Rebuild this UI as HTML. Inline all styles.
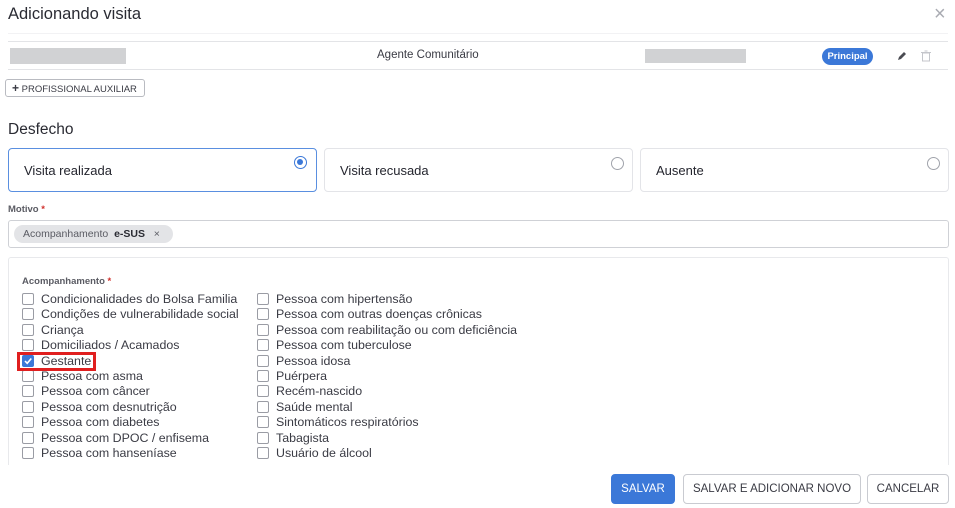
<!DOCTYPE html>
<html><head><meta charset="utf-8"><style>
*{box-sizing:border-box;margin:0;padding:0}
body{width:955px;height:508px;background:#fff;font-family:"Liberation Sans",sans-serif;color:#24252e;position:relative;overflow:hidden}
.a{position:absolute}
.gbar{background:#d1d2d4}
.card{position:absolute;top:148px;height:44px;border:1px solid #e3e4e8;border-radius:4px;font-size:13px;padding:14px 15px}
.radio{position:absolute;top:8px;right:8px;width:13px;height:13px;border:1px solid #a0a3ab;border-radius:50%}
.cb{position:absolute;width:12px;height:12px;border:1px solid #9a9ca4;border-radius:2px;background:#fff}
.lbl{position:absolute;font-size:12.4px;color:#3a3b44;white-space:nowrap;line-height:14px}
.btn{position:absolute;top:474px;height:30px;border:1px solid #c9cbd1;border-radius:4px;font-size:11.5px;text-align:center;line-height:28px;color:#3a3b44}
</style></head><body>
<div class="a" style="left:8px;top:5px;font-size:16.5px;color:#2a2b33">Adicionando visita</div>
<div class="a" style="left:934px;top:3px;font-size:20px;color:#a9abb2">×</div>
<div class="a" style="left:8px;top:33px;width:940px;height:1px;background:#f2f2f4"></div>
<div class="a" style="left:8px;top:41px;width:940px;height:1px;background:#e3e4e7"></div>
<div class="a" style="left:8px;top:69px;width:940px;height:1px;background:#e3e4e7"></div>
<div class="a gbar" style="left:10px;top:48px;width:116px;height:16px"></div>
<div class="a" style="left:377px;top:49px;font-size:11.5px;color:#3a3b44">Agente Comunitário</div>
<div class="a gbar" style="left:645px;top:49px;width:101px;height:14px"></div>
<div class="a" style="left:822px;top:48px;width:51px;height:17px;border-radius:9px;background:#3b78d8;color:#fff;font-size:9.5px;font-weight:bold;text-align:center;line-height:17px">Principal</div>
<svg class="a" style="left:896px;top:50px" width="12" height="12" viewBox="0 0 12 12"><path d="M2 10 L3 7 L8 2 L10 4 L5 9 Z" fill="#4a4b52"/></svg>
<svg class="a" style="left:921px;top:50px" width="10" height="12" viewBox="0 0 10 12"><rect x="1.5" y="3" width="7" height="8" fill="none" stroke="#c4c6cb"/><path d="M0 2.5h10M3.5 1h3" stroke="#c4c6cb"/></svg>
<div class="a" style="left:5px;top:79px;width:140px;height:18px;border:1px solid #b9bbc1;border-radius:3px;font-size:9.5px;line-height:16px;padding-left:6px;color:#3a3b44"><b style="font-size:12px">+</b> PROFISSIONAL AUXILIAR</div>
<div class="a" style="left:8px;top:121px;font-size:15.5px;color:#2a2b33">Desfecho</div>
<div class="card" style="left:8px;width:309px;border-color:#5a8fe0">Visita realizada<div class="radio" style="border:1.5px solid #3b78d8;top:7px;right:9px"><div style="position:absolute;left:2px;top:2px;width:6px;height:6px;border-radius:50%;background:#3b78d8"></div></div></div>
<div class="card" style="left:324px;width:309px">Visita recusada<div class="radio"></div></div>
<div class="card" style="left:640px;width:309px">Ausente<div class="radio"></div></div>
<div class="a" style="left:8px;top:204px;font-size:9.5px;color:#5a5b63;font-weight:bold">Motivo <span style="color:#d0312d">*</span></div>
<div class="a" style="left:8px;top:220px;width:941px;height:28px;border:1px solid #cfd1d6;border-radius:3px"></div>
<div class="a" style="left:14px;top:225px;width:159px;height:18px;border-radius:9px;background:#e3e4e7;font-size:10.5px;line-height:18px;padding-left:9px;color:#5a5b63">Acompanhamento &nbsp;<b style="color:#2a2b33">e-SUS</b> &nbsp;&nbsp;×</div>
<div class="a" style="left:8px;top:257px;width:941px;height:215px;border:1px solid #e8e9ec;border-bottom:none;border-radius:3px"></div>
<div class="a" style="left:0;top:465px;width:955px;height:43px;background:#fff"></div>
<div class="a" style="left:22px;top:276px;font-size:9.5px;color:#5a5b63;font-weight:bold">Acompanhamento <span style="color:#d0312d">*</span></div>
<div id="list"></div>
<div class="a" style="left:17px;top:352px;width:79px;height:19px;border:3px solid #e01f1f"></div>
<div class="btn" style="left:611px;width:64px;background:#3b78d8;border-color:#3b78d8;color:#fff">SALVAR</div>
<div class="btn" style="left:683px;width:178px">SALVAR E ADICIONAR NOVO</div>
<div class="btn" style="left:867px;width:82px">CANCELAR</div>
<script>
var c1=["Condicionalidades do Bolsa Familia","Condições de vulnerabilidade social","Criança","Domiciliados / Acamados","Gestante","Pessoa com asma","Pessoa com câncer","Pessoa com desnutrição","Pessoa com diabetes","Pessoa com DPOC / enfisema","Pessoa com hanseníase"];
var c2=["Pessoa com hipertensão","Pessoa com outras doenças crônicas","Pessoa com reabilitação ou com deficiência","Pessoa com tuberculose","Pessoa idosa","Puérpera","Recém-nascido","Saúde mental","Sintomáticos respiratórios","Tabagista","Usuário de álcool"];
var h="";
for(var i=0;i<11;i++){var y=292+i*15.4;
h+='<div class="cb" style="left:22px;top:'+(y+1)+'px'+(i==4?';background:#3b78d8;border-color:#3b78d8':'')+'">'+(i==4?'<svg width="10" height="10" style="position:absolute;left:0;top:0"><path d="M2 5 L4.2 7.3 L8.3 2.5" stroke="#fff" stroke-width="1.6" fill="none"/></svg>':'')+'</div><div class="lbl" style="left:41px;top:'+y+'px">'+c1[i]+'</div>';
h+='<div class="cb" style="left:257px;top:'+(y+1)+'px"></div><div class="lbl" style="left:276px;top:'+y+'px">'+c2[i]+'</div>';}
document.getElementById("list").innerHTML=h;
</script>
</body></html>
